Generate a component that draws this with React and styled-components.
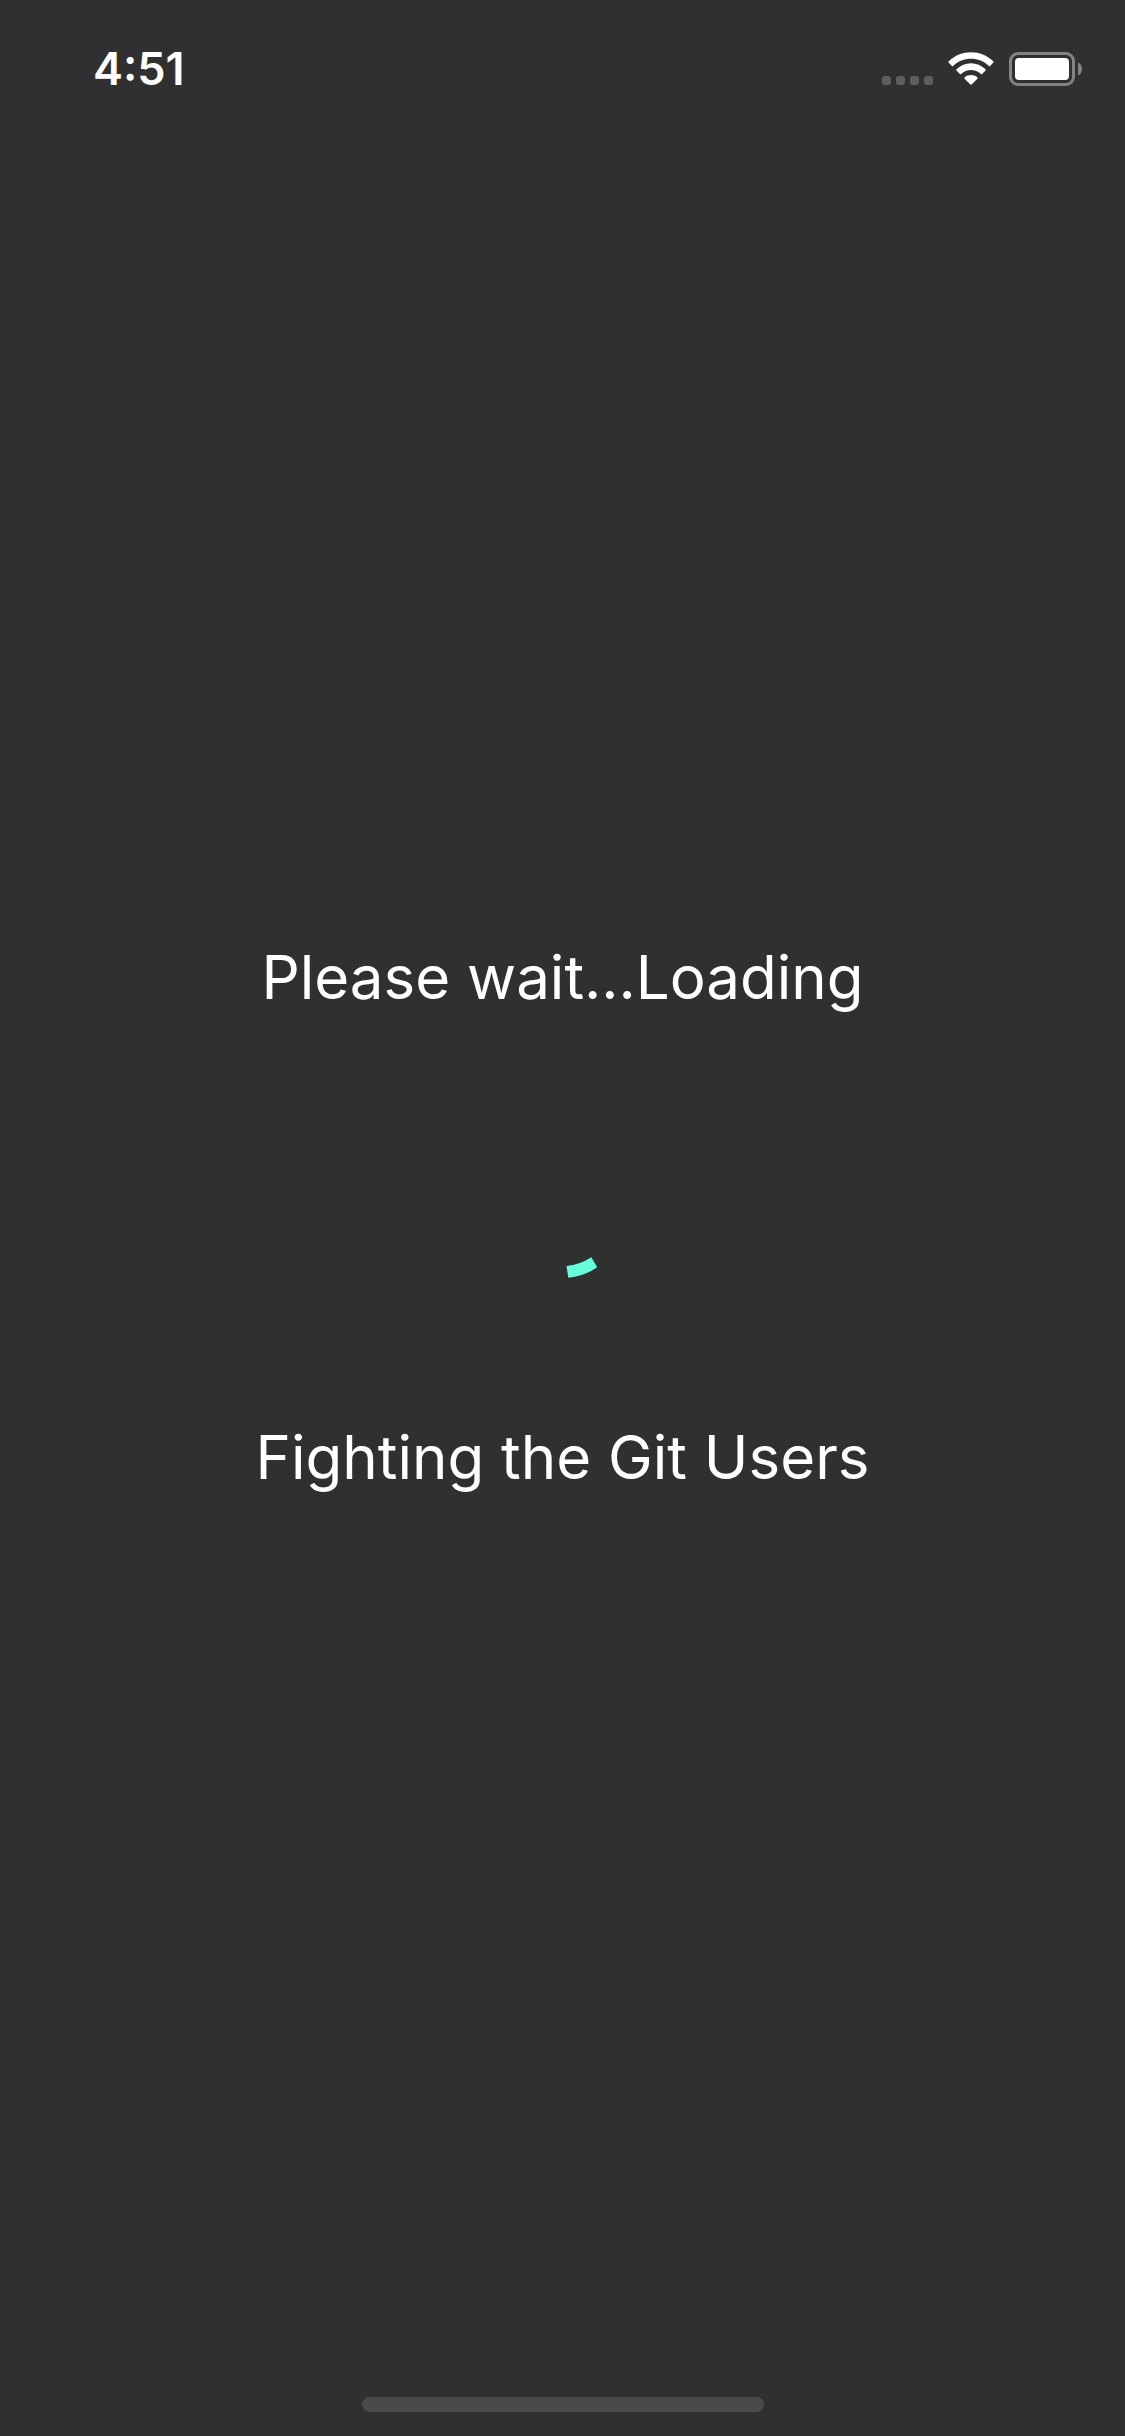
import React from "react";
import styled, { createGlobalStyle } from "styled-components";

const GlobalStyle = createGlobalStyle`
  body {
    margin: 0;
    background: #303030;
    color: #fff;
    font-family: Inter, "Liberation Sans", sans-serif;
  }
`;

const Screen = styled.div`
  display: flex;
  flex-direction: column;
  min-height: 100vh;
`;

const StatusBar = styled.header`
  display: flex;
  justify-content: space-between;
  align-items: flex-start;
  box-sizing: border-box;
  height: 132px;
  padding: 42px 42px 0 93px;
`;

const Clock = styled.time`
  font-size: 45px;
  line-height: 54px;
  font-weight: 600;
`;

const StatusIcons = styled.div`
  display: flex;
  align-items: flex-end;
  gap: 15px;
  padding-top: 10px;
`;

const StatusIcon = styled.svg`
  display: block;
  width: ${({ $width }) => $width}px;
  height: 34px;
`;

const Content = styled.main`
  display: flex;
  flex: 1;
  flex-direction: column;
  align-items: center;
  justify-content: center;
  gap: 149px;
`;

const Message = styled.p`
  margin: 0;
  padding-bottom: 2px;
  font-size: 60px;
  line-height: 72px;
  font-weight: 400;
  text-align: center;
`;

const Spinner = styled.svg`
  display: block;
  width: 108px;
  height: 108px;
  overflow: visible;
`;

const BottomArea = styled.footer`
  display: flex;
  align-items: flex-end;
  justify-content: center;
  box-sizing: border-box;
  height: 132px;
  padding-bottom: 24px;
`;

const HomeIndicator = styled.div`
  width: 402px;
  height: 15px;
  border-radius: 8px;
  background: #4a4a4a;
`;

function SignalIcon() {
  return (
    <StatusIcon $width={51} viewBox="0 0 51 34" aria-hidden="true">
      {[0, 14, 28, 42].map((x) => (
        <rect key={x} x={x} y="24" width="9" height="9" rx="3" fill="#5e5e5e" />
      ))}
    </StatusIcon>
  );
}

function WifiIcon() {
  return (
    <StatusIcon $width={46} viewBox="0 0 46 34" fill="#fff" aria-hidden="true">
      <path d="M.6 9.4C13-2.9 33-2.9 45.4 9.4q.6.6 0 1.200l-3.300 3.300q-.6.6-1.200 0C31 4.400 15 4.400 5.100 13.900q-.6.6-1.200 0L.6 10.600q-.6-.6 0-1.200Z" />
      <path d="M8.500 17.300c8-8 21-8 29 0q.6.6 0 1.200l-3.400 3.400q-.6.5-1.200 0c-5.600-5.100-14.200-5.100-19.800 0q-.6.5-1.200 0L8.500 18.500q-.6-.6 0-1.200Z" />
      <path d="M16.600 25.400c3.700-3.200 9.100-3.200 12.800 0q.7.6 0 1.300l-5.800 5.800q-.6.6-1.200 0l-5.800-5.800q-.7-.7 0-1.300Z" />
    </StatusIcon>
  );
}

function BatteryIcon() {
  return (
    <StatusIcon $width={74} viewBox="0 0 74 34" aria-hidden="true">
      <rect x="1.500" y="1.500" width="63" height="31" rx="7.500" fill="none" stroke="#838383" strokeWidth="3" />
      <rect x="6" y="6" width="54" height="22" rx="4" fill="#fff" />
      <path d="M69 10.500c2.600 1 4 3.500 4 6.500s-1.400 5.500-4 6.500Z" fill="#838383" />
    </StatusIcon>
  );
}

export default function App() {
  return (
    <>
      <GlobalStyle />
      <Screen>
        <StatusBar>
          <Clock>4:51</Clock>
          <StatusIcons>
            <SignalIcon />
            <WifiIcon />
            <BatteryIcon />
          </StatusIcons>
        </StatusBar>
        <Content>
          <Message>Please wait...Loading</Message>
          <Spinner viewBox="0 0 108 108" role="progressbar" aria-label="Loading">
            <path d="M57.500 102L59.300 113.700A60 60 0 0 0 88.200 103.300L82.300 93.300A54 54 0 0 1 57.500 102Z" fill="#64ffda" />
          </Spinner>
          <Message>Fighting the Git Users</Message>
        </Content>
        <BottomArea>
          <HomeIndicator />
        </BottomArea>
      </Screen>
    </>
  );
}
